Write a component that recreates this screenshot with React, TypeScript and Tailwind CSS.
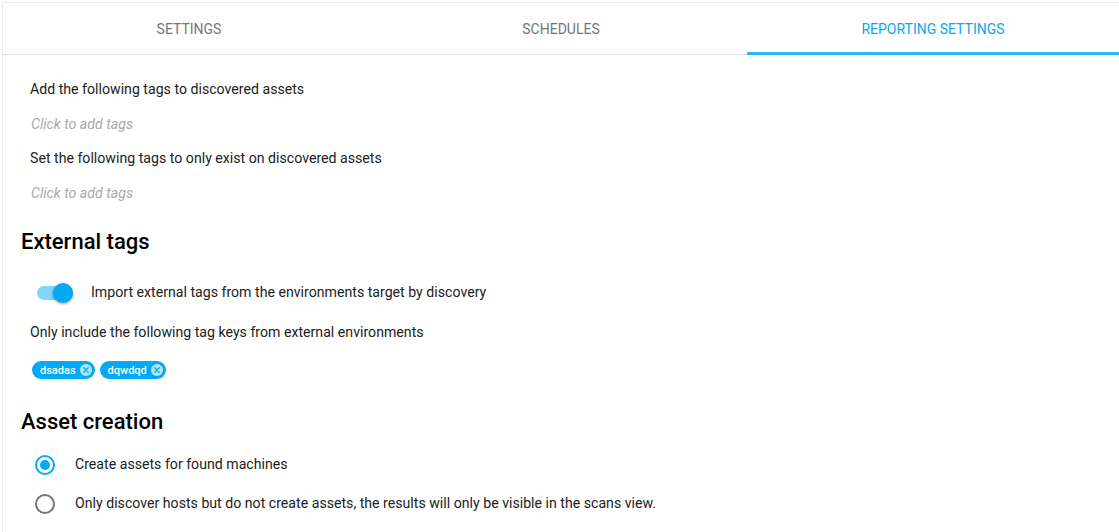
const tabs = ['Settings', 'Schedules', 'Reporting settings'];

function Toggle({ on }: { on: boolean }) {
  return (
    <div className="relative w-[36px] h-[20px] flex items-center">
      <div className={`w-[36px] h-[14px] rounded-full ${on ? 'bg-[#81d4fa]' : 'bg-[#bdbdbd]'}`} />
      <div
        className={`absolute top-0 ${on ? 'left-[16px]' : 'left-0'} w-[20px] h-[20px] rounded-full ${
          on ? 'bg-[#03a9f4]' : 'bg-white'
        } shadow-[0_1px_3px_rgba(0,0,0,0.4)]`}
      />
    </div>
  );
}

function Radio({ checked }: { checked: boolean }) {
  return (
    <svg width="24" height="24" viewBox="0 0 24 24">
      <circle cx="12" cy="12" r="9" fill="none" stroke={checked ? '#03a9f4' : '#757575'} strokeWidth="2" />
      {checked && <circle cx="12" cy="12" r="5" fill="#03a9f4" />}
    </svg>
  );
}

function Chip({ label }: { label: string }) {
  return (
    <span className="inline-flex items-center h-[18px] rounded-full bg-[#03a9f4] pl-[8px] pr-[2px] gap-[3px]">
      <span className="text-[11px] font-medium text-white leading-none">{label}</span>
      <svg width="14" height="14" viewBox="0 0 14 14">
        <circle cx="7" cy="7" r="6" fill="white" fillOpacity="0.7" />
        <path d="M4.8 4.8 L9.2 9.2 M9.2 4.8 L4.8 9.2" stroke="#03a9f4" strokeWidth="1.4" strokeLinecap="round" />
      </svg>
    </span>
  );
}

export default function App() {
  return (
    <div className="w-[1119px] h-[532px] overflow-hidden bg-white pt-[2px] pl-[2px] font-['Roboto',sans-serif]">
      <div className="h-full border-t border-l border-[#ececec]">
        <div className="flex h-[52px] border-b border-[#e0e0e0]">
          {tabs.map((t, i) => {
            const active = i === 2;
            return (
              <div key={t} className="relative flex-1 flex items-center justify-center pt-[2px]">
                <span className={`text-[14px] uppercase ${active ? 'text-[#03a9f4]' : 'text-[#757575]'}`}>{t}</span>
                {active && <div className="absolute left-0 right-0 bottom-[-1px] h-[3px] bg-[#29b6f6]" />}
              </div>
            );
          })}
        </div>

        <div className="px-[18px] pt-[17px] text-[14.15px] text-[#212121]">
          <div className="pl-[9px]">
            <div className="h-[34px] flex items-center pt-[2px]">Add the following tags to discovered assets</div>
            <div className="h-[35px] flex items-center pt-[2px] italic text-[#aaaaaa] pl-[1px]">Click to add tags</div>
            <div className="h-[34px] flex items-center pt-[2px]">Set the following tags to only exist on discovered assets</div>
            <div className="h-[35px] flex items-center pt-[2px] italic text-[#aaaaaa] pl-[1px]">Click to add tags</div>
          </div>

          <h2 className="mt-[17px] h-[28px] flex items-center text-[22px] font-medium text-black">External tags</h2>
          <div className="pl-[9px]">
            <div className="mt-[17px] h-[40px] flex items-center pt-[2px]">
              <div className="ml-[7px] mr-[18px]">
                <Toggle on />
              </div>
              <span>Import external tags from the environments target by discovery</span>
            </div>
            <div className="h-[38px] flex items-center pt-[4px]">Only include the following tag keys from external environments</div>
            <div className="h-[40px] flex items-center gap-[5px] pl-[2px]">
              <Chip label="dsadas" />
              <Chip label="dqwdqd" />
            </div>
          </div>

          <h2 className="mt-[17px] h-[28px] flex items-center text-[22px] font-medium text-black">Asset creation</h2>
          <div className="pl-[9px] mt-[10px]">
            <div className="h-[38px] flex items-center pt-[2px]">
              <div className="ml-[3px] mr-[18px]">
                <Radio checked />
              </div>
              <span>Create assets for found machines</span>
            </div>
            <div className="h-[40px] flex items-center pt-[2px]">
              <div className="ml-[3px] mr-[18px]">
                <Radio checked={false} />
              </div>
              <span>Only discover hosts but do not create assets, the results will only be visible in the scans view.</span>
            </div>
          </div>
        </div>
      </div>
    </div>
  );
}
